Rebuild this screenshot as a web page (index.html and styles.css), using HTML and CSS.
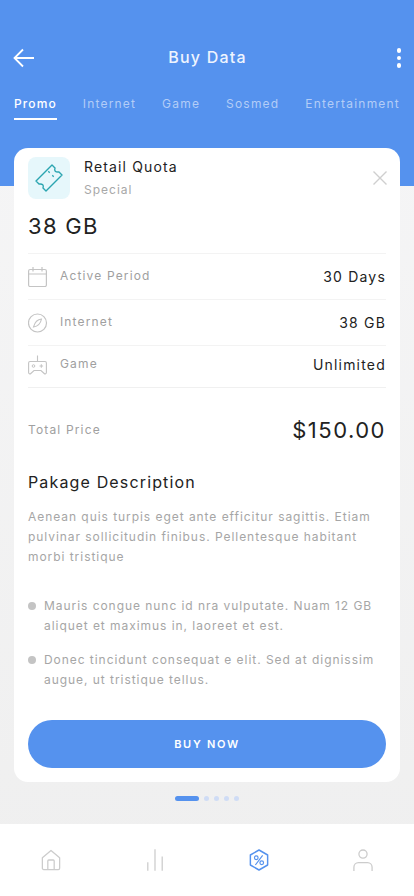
FILE: index.html
```html
<!DOCTYPE html>
<html lang="en">
<head>
<meta charset="utf-8">
<title>Buy Data</title>
<link rel="stylesheet" href="styles.css">
</head>
<body>
<div class="screen">
  <header class="hero">
    <div class="topbar">
      <svg class="back" viewBox="0 0 22 20" width="22" height="20"><path d="M21 10H1.500M10 1.500 1.500 10l8.500 8.500" fill="none" stroke="#fff" stroke-width="1.800"/></svg>
      <h1>Buy Data</h1>
      <div class="more"><i></i><i></i><i></i></div>
    </div>
    <nav class="tabs">
      <span class="tab active">Promo</span>
      <span class="tab">Internet</span>
      <span class="tab">Game</span>
      <span class="tab">Sosmed</span>
      <span class="tab">Entertainment</span>
    </nav>
  </header>
  <main class="content">
    <section class="card">
      <div class="head">
        <div class="ticket">
          <svg viewBox="0 0 42 42" width="42" height="42"><path d="M8 24 24 8l3 3q-1.500 4.500 4 4l3 3-16 16-3-3q1.500-4.500-4-4z" fill="none" stroke="#2ba5b0" stroke-width="1.400" stroke-linejoin="round"/><path d="M20.300 14.300l1.400 1.400M24.300 18.300l1.400 1.400" stroke="#2ba5b0" stroke-width="1.300"/></svg>
        </div>
        <div class="head-text">
          <div class="name">Retail Quota</div>
          <div class="sub">Special</div>
        </div>
        <svg class="close" viewBox="0 0 14 14" width="14" height="14"><path d="M.5.500l13 13M13.500.5l-13 13" stroke="#cfcfcf" stroke-width="1.400" fill="none"/></svg>
      </div>
      <div class="size">38 GB</div>
      <div class="row row-a">
        <svg viewBox="0 0 20 20" width="20" height="20"><rect x=".6" y="2.500" width="17.800" height="17" rx="1.500" fill="none" stroke="#c4c4c4" stroke-width="1.200"/><path d="M.6 7h17.800M5 0v4.500M14 0v4.500" stroke="#c4c4c4" stroke-width="1.200"/></svg>
        <span class="label">Active Period</span><span class="value">30 Days</span>
      </div>
      <div class="row row-b">
        <svg viewBox="0 0 20 20" width="20" height="20"><circle cx="9.500" cy="10" r="9" fill="none" stroke="#c4c4c4" stroke-width="1.200"/><path d="M13.500 6c-3.500.3-6.500 2.500-8 8 3.500-.5 7-3 8-8z" fill="none" stroke="#c4c4c4" stroke-width="1.100"/></svg>
        <span class="label">Internet</span><span class="value">38 GB</span>
      </div>
      <div class="row row-c">
        <svg viewBox="0 0 20 20" width="20" height="20"><path d="M9.500 .5v6M2 6.500h15a1.500 1.500 0 0 1 1.400 1.500v9.500a1.300 1.300 0 0 1-2.200 1L13 15.500H6l-3.200 3a1.300 1.300 0 0 1-2.200-1V8A1.500 1.500 0 0 1 2 6.500z" fill="none" stroke="#c4c4c4" stroke-width="1.100"/><circle cx="5.500" cy="11" r="1.300" fill="none" stroke="#c4c4c4"/><path d="M11.500 11h3.600M13.300 9.200v3.600" stroke="#c4c4c4"/></svg>
        <span class="label">Game</span><span class="value">Unlimited</span>
      </div>
      <div class="total">
        <span class="label">Total Price</span><span class="price">$150.00</span>
      </div>
      <h2>Pakage Description</h2>
      <p class="desc">Aenean quis turpis eget ante efficitur sagittis. Etiam pulvinar sollicitudin finibus. Pellentesque habitant morbi tristique</p>
      <ul class="points">
        <li>Mauris congue nunc id nra vulputate. Nuam 12 GB aliquet et maximus in, laoreet et est.</li>
        <li>Donec tincidunt consequat e elit. Sed at dignissim augue, ut tristique tellus.</li>
      </ul>
      <button class="buy">BUY NOW</button>
    </section>
    <div class="pager"><b></b><i></i><i></i><i></i><i></i></div>
  </main>
  <footer class="bottom">
    <svg viewBox="0 0 22 24" width="20" height="22"><path d="M1.500 9.500 11 1.500l9.500 8V21a1.500 1.500 0 0 1-1.500 1.500H3A1.500 1.500 0 0 1 1.500 21z" fill="none" stroke="#cccccc" stroke-width="1.400" stroke-linejoin="round"/><path d="M7.500 22.500V13a1 1 0 0 1 1-1h5a1 1 0 0 1 1 1v9.500" fill="none" stroke="#cccccc" stroke-width="1.400"/></svg>
    <svg viewBox="0 0 20 24" width="18" height="22"><path d="M2 14.500V24M10 0v24M18 8v16" stroke="#cccccc" stroke-width="1.400" fill="none"/></svg>
    <svg viewBox="0 0 22 24" width="20" height="22"><path d="M11 1 20.500 6.500v11L11 23 1.500 17.500v-11z" fill="none" stroke="#5592ee" stroke-width="1.600" stroke-linejoin="round"/><circle cx="8" cy="9.500" r="2" fill="none" stroke="#5592ee" stroke-width="1.300"/><circle cx="14" cy="15" r="2" fill="none" stroke="#5592ee" stroke-width="1.300"/><path d="M15 7 7 17.500" stroke="#5592ee" stroke-width="1.300"/></svg>
    <svg viewBox="0 0 22 24" width="20" height="22"><circle cx="11" cy="5.500" r="4.500" fill="none" stroke="#cccccc" stroke-width="1.400"/><path d="M1 24v-4a5 5 0 0 1 5-5h10a5 5 0 0 1 5 5v4" fill="none" stroke="#cccccc" stroke-width="1.400"/></svg>
  </footer>
</div>
</body>
</html>
```
FILE: styles.css
```css
* { box-sizing: border-box; }
html, body { margin: 0; padding: 0; }
body { font-family: Inter, "Liberation Sans", sans-serif; background: #fff; }
.screen { width: 414px; height: 896px; overflow: hidden; display: flex; flex-direction: column; background: linear-gradient(#f6f6f7, #efefef); }
.hero { height: 186px; flex: none; background: #5592ee; color: #fff; padding: 46px 12px 0 13px; }
.topbar { display: grid; grid-template-columns: 1fr auto 1fr; align-items: center; height: 24px; }
.back { display: block; }
h1 { margin: -2px 0 0; font-size: 16px; line-height: 24px; font-weight: 500; letter-spacing: 1.200px; color: #eef4fe; }
.more { display: flex; flex-direction: column; gap: 3px; justify-self: end; margin-right: 1px; }
.more i { display: block; width: 4.500px; height: 4.500px; border-radius: 50%; background: #fff; }
.tabs { display: flex; justify-content: space-between; margin-top: 25px; padding: 0 2px 0 1px; white-space: nowrap; }
.tab { font-size: 12px; line-height: 18px; letter-spacing: 1.200px; color: #b3cdf7; padding-bottom: 5px; border-bottom: 2px solid transparent; }
.tab.active { color: #fff; font-weight: 500; letter-spacing: 1.100px; border-bottom-color: #fff; }
.content { flex: 1; display: flex; flex-direction: column; align-items: center; margin-top: -38px; }
.card { width: 386px; height: 634px; background: #fff; border-radius: 14px; padding: 9px 14px 0; display: flex; flex-direction: column; }
.head { display: flex; align-items: flex-start; height: 42px; }
.ticket { width: 42px; height: 42px; border-radius: 8px; background: #e6f7fb; flex: none; }
.ticket svg { display: block; }
.head-text { margin-left: 14px; flex: 1; padding-top: 1px; }
.name { font-size: 14px; line-height: 18px; letter-spacing: 1.150px; font-weight: 400; color: #222; }
.sub { font-size: 12px; line-height: 18px; margin-top: 5px; letter-spacing: 1px; color: #a8a8a8; }
.close { margin: 14px -1px 0 0; }
.size { font-size: 22px; line-height: 28px; letter-spacing: 1.300px; font-weight: 400; color: #222; margin-top: 13px; margin-bottom: 13px; }
.row { display: flex; align-items: center; border-top: 1px solid #f3f3f3; }
.row-a { height: 46px; }
.row-b { height: 46px; }
.row-c { height: 43px; padding-bottom: 4px; border-bottom: 1px solid #f0f0f0; }
.row svg { flex: none; margin-right: 12px; }
.label { font-size: 12px; letter-spacing: 1.150px; color: #a0a0a0; flex: 1; margin-bottom: 2px; }
.value { font-size: 14px; letter-spacing: 1.200px; font-weight: 400; color: #222; }
.total { display: flex; align-items: center; height: 28px; margin-top: 28px; }
.price { font-size: 22px; line-height: 28px; font-weight: 400; letter-spacing: 1.500px; color: #222; }
h2 { margin: 27px 0 0; font-size: 16px; line-height: 22px; font-weight: 400; letter-spacing: 1.150px; color: #222; }
.desc { margin: 14px 0 0; font-size: 12px; line-height: 20px; letter-spacing: .95px; color: #a6a6a6; }
.points { list-style: none; margin: 29px 0 0; padding: 0; }
.points li { position: relative; padding-left: 16px; font-size: 12px; line-height: 20px; letter-spacing: .95px; color: #a6a6a6; margin-bottom: 14px; }
.points li::before { content: ""; position: absolute; left: 0; top: 6px; width: 8px; height: 8px; border-radius: 50%; background: #c4c4c4; }
.buy { margin-top: 16px; height: 48px; width: 358px; border: 0; border-radius: 24px; background: #5592ee; color: #fff; font: 600 11px Inter, "Liberation Sans", sans-serif; letter-spacing: 1.700px; }
.pager { display: flex; align-items: center; gap: 5px; margin-top: 14px; }
.pager b { width: 24px; height: 5px; border-radius: 3px; background: #5592ee; }
.pager i { width: 5px; height: 5px; border-radius: 50%; background: #cfdcf5; }
.bottom { flex: none; height: 72px; background: #fff; display: grid; grid-template-columns: repeat(4, 104px); justify-content: center; justify-items: center; align-items: start; padding: 25px 0 0; }
.bottom svg { display: block; }
```
